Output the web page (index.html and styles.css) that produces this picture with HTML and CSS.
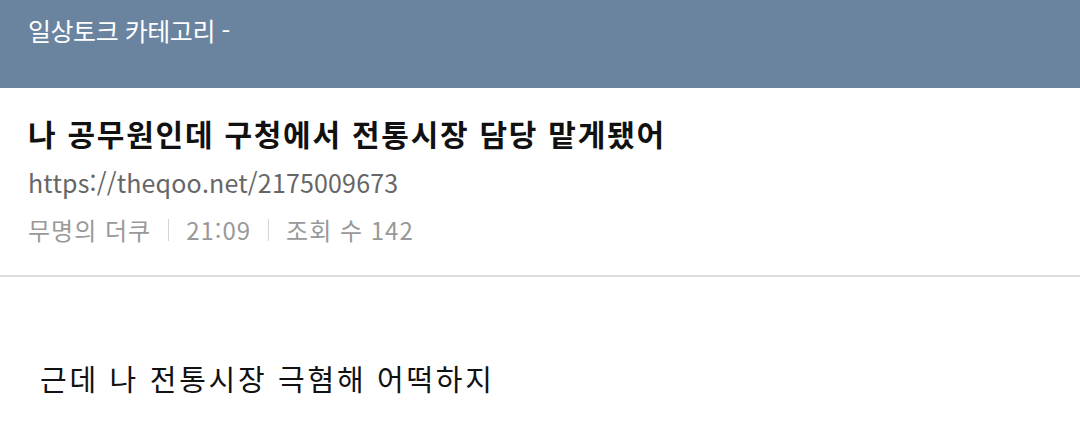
FILE: index.html
```html
<!DOCTYPE html>
<html lang="ko">
<head>
<meta charset="utf-8">
<link rel="stylesheet" href="styles.css">
</head>
<body>
<header class="topbar">
  <div class="category">일상토크 카테고리 -</div>
</header>
<section class="post-head">
  <h1 class="title">나 공무원인데 구청에서 전통시장 담당 맡게됐어</h1>
  <div class="url">https://theqoo.net/2175009673</div>
  <div class="meta">
    <span>무명의 더쿠</span>
    <span class="sep"></span>
    <span>21:09</span>
    <span class="sep"></span>
    <span>조회 수 142</span>
  </div>
</section>
<section class="post-body">
  <p class="content">근데 나 전통시장 극혐해 어떡하지</p>
</section>
</body>
</html>
```
FILE: styles.css
```css
* { box-sizing: border-box; }
html, body {
  margin: 0;
  padding: 0;
  background: #ffffff;
  font-family: "Noto Sans CJK KR", "Noto Sans", sans-serif;
}
.topbar {
  height: 88px;
  background: #6a84a0;
  display: flex;
  align-items: center;
  padding: 0 28px 28px;
}
.category {
  color: #ffffff;
  font-size: 25px;
  letter-spacing: -0.45px;
}
.post-head {
  padding: 20px 28px 0;
  height: 189px;
  border-bottom: 2px solid #dedede;
}
.title {
  margin: 0;
  font-size: 30px;
  font-weight: bold;
  color: #111;
  line-height: 50px;
  letter-spacing: 1.75px;
}
.url {
  color: #666;
  font-size: 25px;
  line-height: 48px;
  letter-spacing: 0.17px;
}
.meta {
  color: #999;
  font-size: 24px;
  line-height: 48px;
  display: flex;
  align-items: center;
  letter-spacing: 1px;
}
.sep {
  width: 1px;
  height: 22px;
  background: #d5d5d5;
  margin: 0 17px;
}
.post-body {
  padding: 80px 40px 0;
}
.content {
  margin: 0;
  font-size: 29px;
  color: #111;
  letter-spacing: 2.7px;
}
```
